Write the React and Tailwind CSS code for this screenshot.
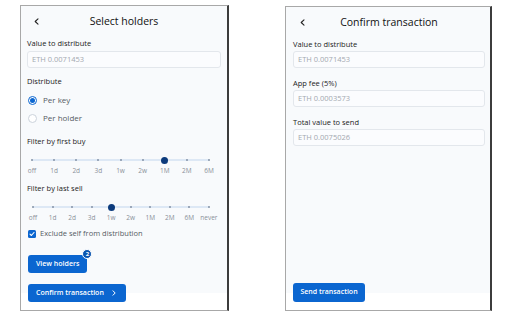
import React from "react";

const FONT = "font-['Open_Sans',_'Noto_Sans',_sans-serif]";

function Chevron() {
  return (
    <svg width="5" height="7" viewBox="0 0 5 7" className="block">
      <path d="M4 0.8 L1.2 3.5 L4 6.2" fill="none" stroke="#222" strokeWidth="1.1" strokeLinecap="round" strokeLinejoin="round" />
    </svg>
  );
}

function Header({ title }) {
  return (
    <div className="h-[31px] grid grid-cols-[1fr_auto_1fr] items-center">
      <div className="pl-[7px]">
        <Chevron />
      </div>
      <div className="text-[10.5px] text-[#111] leading-none">{title}</div>
      <div />
    </div>
  );
}

function Label({ children, className = "" }) {
  return <div className={"h-[12px] leading-[12px] text-[7.5px] text-[#222] font-medium " + className}>{children}</div>;
}

function Field({ value, className = "" }) {
  return (
    <div className={"h-[17px] rounded-[3px] border border-[#e3e7ec] bg-[#fbfcfe] flex items-center px-[4px] text-[7.5px] text-[#a3a8b0] " + className}>
      {value}
    </div>
  );
}

function Radio({ checked, label, className = "" }) {
  return (
    <div className={"h-[14px] flex items-center " + className}>
      {checked ? (
        <div className="w-[9px] h-[9px] ml-[1px] rounded-full border border-[#0b66d0] bg-white flex items-center justify-center">
          <div className="w-[5px] h-[5px] rounded-full bg-[#0b66d0]" />
        </div>
      ) : (
        <div className="w-[9px] h-[9px] ml-[1px] rounded-full border border-[#ccd3dc] bg-white" />
      )}
      <span className="ml-[6px] text-[8px] text-[#555b63]">{label}</span>
    </div>
  );
}

function Slider({ labels, value, className }) {
  return (
    <div className={className}>
      <div className="h-[10px] flex items-center">
        <div className="h-[2px] w-full bg-[#dde8f5] flex justify-between items-center">
          {labels.map((l, i) => (
            <div key={l} className="w-0 h-0 flex items-center justify-center">
              {i === value ? (
                <div className="w-[7px] h-[7px] shrink-0 rounded-full bg-[#0c3b7c]" />
              ) : (
                <div className="w-[2px] h-[2px] shrink-0 rounded-full bg-[#8593a6]" />
              )}
            </div>
          ))}
        </div>
      </div>
      <div className="h-[12px] flex justify-between items-center">
        {labels.map((l) => (
          <div key={l} className="w-0 flex justify-center whitespace-nowrap text-[6.5px] text-[#8a9099]">
            {l}
          </div>
        ))}
      </div>
    </div>
  );
}

function Badge() {
  return (
    <div className="absolute -right-[5px] -top-[6px] w-[10px] h-[10px] rounded-full bg-[#0b55b0] border border-white flex items-center justify-center text-[6px] font-bold text-white leading-none">
      2
    </div>
  );
}

export default function App() {
  return (
    <div className={"w-[512px] h-[320px] bg-white flex items-start " + FONT}>
      {/* Left panel */}
      <div className="ml-[20px] mt-[5px] w-[209px] h-[306px] border-t border-l border-b border-[#a8a8a8] border-r-2 border-r-[#3c3c3c] bg-white">
        <div className="h-[287px] bg-[#f8fafc] px-[6px] flex flex-col">
          <Header title="Select holders" />
          <Label>Value to distribute</Label>
          <Field value="ETH 0.0071453" className="mt-[2px]" />
          <Label className="mt-[7px]">Distribute</Label>
          <Radio checked label="Per key" className="mt-[6px]" />
          <Radio label="Per holder" className="mt-[4px]" />
          <Label className="mt-[10px]">Filter by first buy</Label>
          <Slider
            className="mt-[8px] ml-[5px] w-[177px]"
            labels={["off", "1d", "2d", "3d", "1w", "2w", "1M", "2M", "6M"]}
            value={6}
          />
          <Label className="mt-[5px]">Filter by last sell</Label>
          <Slider
            className="mt-[8px] ml-[6px] w-[176px]"
            labels={["off", "1d", "2d", "3d", "1w", "2w", "1M", "2M", "6M", "never"]}
            value={4}
          />
          <div className="mt-[4px] h-[12px] flex items-center">
            <div className="w-[8px] h-[8px] ml-[1px] rounded-[1.5px] bg-[#0b66d0] flex items-center justify-center">
              <svg width="6" height="6" viewBox="0 0 6 6">
                <path d="M1 3.1 L2.4 4.5 L5 1.5" fill="none" stroke="white" strokeWidth="1.1" strokeLinecap="round" strokeLinejoin="round" />
              </svg>
            </div>
            <span className="ml-[4px] text-[7.5px] text-[#555b63]">Exclude self from distribution</span>
          </div>
          <div className="mt-[15px] ml-[1px] self-start relative h-[18px] px-[8px] rounded-[3px] bg-[#0b66d0] flex items-center text-[7px] font-semibold text-white">
            View holders
            <Badge />
          </div>
          <div className="mt-auto -mb-[9px] ml-[1px] self-start h-[18px] pl-[8px] pr-[10px] rounded-[3px] bg-[#0b66d0] flex items-center text-[7px] font-semibold text-white">
            Confirm transaction
            <svg width="4" height="6" viewBox="0 0 4 6" className="ml-[8px]">
              <path d="M1 0.8 L3.2 3 L1 5.2" fill="none" stroke="white" strokeWidth="1" strokeLinecap="round" strokeLinejoin="round" />
            </svg>
          </div>
        </div>
      </div>

      {/* Right panel */}
      <div className="ml-[56px] mt-[6px] w-[207px] h-[305px] border-t border-l border-b border-[#a8a8a8] border-r-2 border-r-[#3c3c3c] bg-white">
        <div className="h-[286px] bg-[#f8fafc] pl-[7px] pr-[5px] flex flex-col">
          <Header title="Confirm transaction" />
          <Label>Value to distribute</Label>
          <Field value="ETH 0.0071453" className="mt-[1px]" />
          <Label className="mt-[9px]">App fee (5%)</Label>
          <Field value="ETH 0.0003573" className="mt-[1px]" />
          <Label className="mt-[9px]">Total value to send</Label>
          <Field value="ETH 0.0075026" className="mt-[1px]" />
          <div className="mt-auto -mb-[9px] self-start h-[19px] w-[72px] rounded-[3px] bg-[#0b66d0] flex items-center justify-center text-[7px] font-semibold text-white">
            Send transaction
          </div>
        </div>
      </div>
    </div>
  );
}
